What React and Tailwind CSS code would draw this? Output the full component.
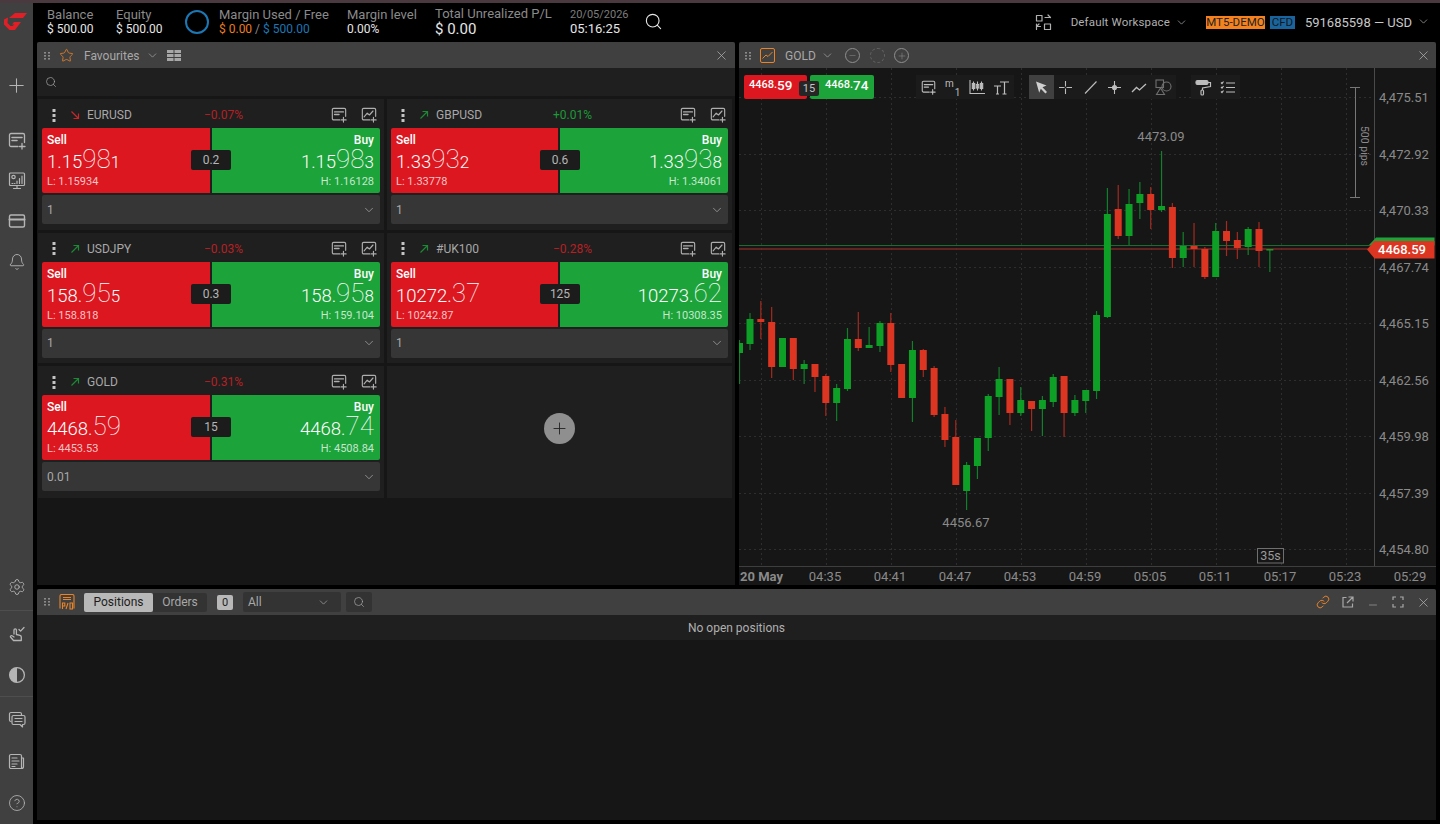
import React from "react";
import { ChevronDown, Search, X, Plus, Star, Settings, Bell, CircleHelp, Link as LinkIcon, Minus } from "lucide-react";

const S = ({ size = 20, children, className = "", vb = 24, sw = 1.5 }) => (
  <svg width={size} height={size} viewBox={`0 0 ${vb} ${vb}`} fill="none" stroke="currentColor" strokeWidth={sw} strokeLinecap="round" strokeLinejoin="round" className={className}>
    {children}
  </svg>
);

const Grip = () => (
  <svg width="6" height="8" viewBox="0 0 6 8" fill="#8a8a8a" className="shrink-0">
    {[0, 3, 6].map((y) => (
      <g key={y}>
        <rect x="0" y={y} width="2" height="1.6" />
        <rect x="4" y={y} width="2" height="1.6" />
      </g>
    ))}
  </svg>
);

const NewOrder = ({ size = 18 }) => (
  <S size={size} vb={18} sw={1.3}>
    <path d="M10 14.5H3a1.5 1.5 0 0 1-1.5-1.5V3A1.5 1.5 0 0 1 3 1.5h12A1.5 1.5 0 0 1 16.5 3v7.5" />
    <path d="M4 5.5h10M4 8.5h5" strokeWidth="1.6" />
    <path d="M14 11.5v5.5M11.5 14.5H17" />
  </S>
);
const NewChart = ({ size = 18 }) => (
  <S size={size} vb={18} sw={1.3}>
    <path d="M10 14.5H3a1.5 1.5 0 0 1-1.5-1.5V3A1.5 1.5 0 0 1 3 1.5h12A1.5 1.5 0 0 1 16.5 3v7.5" />
    <path d="M3.5 11l3.5-4 2.5 2 4-4.5" />
    <path d="M14 11.5v5.5M11.5 14.5H17" />
  </S>
);
const Dashboard = () => (
  <S size={18} vb={18} sw={1.2}>
    <rect x="1.5" y="1" width="15" height="12.5" rx="1" />
    <circle cx="5.5" cy="5" r="1.7" />
    <path d="M9 11.5V9M11.5 11.5V6.5M14 11.5V4M4 11.5h1M6.5 11.5h.5M9 15.5v-2M5.5 16.5h7" />
  </S>
);
const Card = () => (
  <S size={18} vb={18} sw={1.4}>
    <rect x="1.5" y="3" width="15" height="12" rx="1.5" />
    <path d="M1.5 7.5h15" strokeWidth="2" />
  </S>
);
const Hand = () => (
  <S size={18} vb={18} sw={1.3}>
    <path d="M6 9V5a1.2 1.2 0 0 1 2.4 0V9.5l3.6.9c.9.3 1.3.8 1.3 1.6v3.5H5.5L2.5 12c-.5-.7.6-1.9 1.6-1.2L6 12" />
    <path d="M11 4.5l1.6 1.6L16 2.5" />
  </S>
);
const Contrast = () => (
  <svg width="18" height="18" viewBox="0 0 18 18" fill="none">
    <circle cx="9" cy="9" r="7.4" stroke="#b5b5b5" strokeWidth="1.3" />
    <path d="M9 1.6a7.4 7.4 0 0 0 0 14.8z" fill="#b5b5b5" />
  </svg>
);
const Chat = () => (
  <S size={18} vb={18} sw={1.2}>
    <path d="M3 10.5a1.5 1.5 0 0 1-1.5-1.5V3A1.5 1.5 0 0 1 3 1.5h9A1.5 1.5 0 0 1 13.5 3v1" />
    <path d="M5.5 4.5h10A1.5 1.5 0 0 1 17 6v6a1.5 1.5 0 0 1-1.5 1.5h-1v2.5l-2.5-2.5H5.5A1.5 1.5 0 0 1 4 12V6a1.5 1.5 0 0 1 1.5-1.5z" />
    <path d="M7 7.5h7M7 10.5h7" />
  </S>
);
const News = () => (
  <S size={18} vb={18} sw={1.2}>
    <path d="M13.5 15.5H3A1.5 1.5 0 0 1 1.5 14V3A1.5 1.5 0 0 1 3 1.5h9A1.5 1.5 0 0 1 13.5 3v12.5a2 2 0 0 0 2-2V5h-2" />
    <path d="M4 5h5M4 8h7M4 11h5M4 13.5h3" />
  </S>
);
const Logo = () => (
  <svg width="24" height="18" viewBox="0 0 24 18" fill="#e01f26">
    <path d="M5 5L11 0H23L19 5z" />
    <path d="M0 6.5L4 4.5L3.5 10L6.5 13H8.5L10.5 11.5H8L10 9H17L11 17H5.5L0 11.5z" />
  </svg>
);
const Workspace = () => (
  <S size={17} vb={17} sw={1.2}>
    <rect x="1.5" y="1.5" width="5.5" height="5.5" />
    <rect x="9.5" y="10" width="6" height="5.5" />
    <path d="M1.5 10v5.5M10 3.5h5.5M13 1l2.5 2.5M5.5 12.5H1.5M4 10l-2.5 2.5" />
  </S>
);

const SideItem = ({ children, className = "" }) => (
  <div className={`h-[40px] w-full flex items-center justify-center text-[#b5b5b5] shrink-0 ${className}`}>{children}</div>
);

const Sidebar = () => (
  <aside className="w-[33px] shrink-0 bg-[#404040] flex flex-col">
    <div className="h-[38px] flex items-center justify-center shrink-0 pr-[1px]"><Logo /></div>
    <SideItem className="mt-[24px]"><Plus size={23} strokeWidth={1.1} /></SideItem>
    <SideItem className="mt-[16px]"><NewOrder /></SideItem>
    <SideItem><Dashboard /></SideItem>
    <SideItem><Card /></SideItem>
    <SideItem className="mt-[1px]"><Bell size={18} strokeWidth={1.2} /></SideItem>
    <div className="flex-1" />
    <SideItem><Settings size={18} strokeWidth={1.2} /></SideItem>
    <div className="h-px bg-[#4e4e4e] my-[3px] shrink-0" />
    <SideItem><Hand /></SideItem>
    <SideItem className="mt-[1px]"><Contrast /></SideItem>
    <div className="h-px bg-[#4e4e4e] my-[1px] shrink-0" />
    <SideItem className="mt-[2px]"><Chat /></SideItem>
    <SideItem className="mt-[2px]"><News /></SideItem>
    <SideItem className="mt-[1px] mb-[1px]"><CircleHelp size={18} strokeWidth={1.1} /></SideItem>
  </aside>
);

const Stat = ({ label, children, className = "" }) => (
  <div className={`flex flex-col leading-[14px] ${className}`}>
    <span className="text-[13px] text-[#8a8a8a]">{label}</span>
    {children}
  </div>
);

const TopBar = () => (
  <header className="h-[39px] shrink-0 bg-black flex items-center pl-[10px] pr-[6px] pb-[2px]">
    <Stat label="Balance" className="w-[69px]"><span className="text-[12px] text-[#e6e6e6]">$ 500.00</span></Stat>
    <Stat label="Equity" className="w-[69px]"><span className="text-[12px] text-[#e6e6e6]">$ 500.00</span></Stat>
    <div className="w-[24px] h-[24px] rounded-full border-2 border-[#1c77b5] shrink-0" />
    <Stat label="Margin Used / Free" className="w-[128px] ml-[10px]">
      <span className="text-[12px] text-[#8a8a8a]"><span className="text-[#e87d1e]">$ 0.00</span> / <span className="text-[#1c77b5]">$ 500.00</span></span>
    </Stat>
    <Stat label="Margin level" className="w-[88px]"><span className="text-[12px] text-[#e6e6e6]">0.00%</span></Stat>
    <Stat label="Total Unrealized P/L" className="w-[135px]"><span className="text-[15px] leading-[16px] text-[#e6e6e6]">$ 0.00</span></Stat>
    <div className="flex flex-col leading-[14px] w-[74px]">
      <span className="text-[11px] text-[#7d7d7d]">20/05/2026</span>
      <span className="text-[13px] text-[#e6e6e6]">05:16:25</span>
    </div>
    <Search size={19} strokeWidth={1.4} className="text-[#e6e6e6]" />
    <div className="flex-1" />
    <span className="text-[#b0b0b0] mr-[19px] mt-[2px]"><Workspace /></span>
    <span className="text-[11.5px] text-[#b0b0b0] tracking-[0.15px] mt-[2px]">Default Workspace</span>
    <ChevronDown size={13} strokeWidth={1.3} className="text-[#b0b0b0] ml-[5px] mr-[18px] mt-[2px]" />
    <span className="bg-[#f5821f] text-[#222] text-[11.5px] leading-[13px] h-[13px] w-[59px] text-center mt-[2px]">MT5-DEMO</span>
    <span className="bg-[#1a649e] text-[#101820] text-[11.5px] leading-[13px] h-[13px] w-[25px] text-center ml-[5px] mt-[2px]">CFD</span>
    <span className="text-[13px] text-[#c8c8c8] ml-[10px] mt-[3px]">591685598 — USD</span>
    <ChevronDown size={13} strokeWidth={1.3} className="text-[#b0b0b0] ml-[5px]" />
  </header>
);

const Price = ({ a, b, c }) => (
  <div className="flex items-baseline font-light text-white leading-[24px]">
    <span className="text-[18.5px]">{a}</span>
    <span className="text-[26px] font-thin">{b}</span>
    {c && <span className="text-[17px]">{c}</span>}
  </div>
);

const Arrow = ({ up }) =>
  up ? (
    <svg width="10" height="10" viewBox="0 0 10 10" fill="none" stroke="#1c8a34" strokeWidth="1.2"><path d="M1.5 8.5L8 2M3.5 1.5H8.5V6.5" /></svg>
  ) : (
    <svg width="10" height="10" viewBox="0 0 10 10" fill="none" stroke="#c9262c" strokeWidth="1.2"><path d="M1.5 1.5L8 8M8.5 3.5V8.5H3.5" /></svg>
  );

const quotes = [
  { name: "EURUSD", up: false, ch: "−0.07%", chc: "text-[#b71f24]", s: ["1.15", "98", "1"], b: ["1.15", "98", "3"], sp: "0.2", l: "1.15934", h: "1.16128", lot: "1" },
  { name: "GBPUSD", up: true, ch: "+0.01%", chc: "text-[#1c9a38]", s: ["1.33", "93", "2"], b: ["1.33", "93", "8"], sp: "0.6", l: "1.33778", h: "1.34061", lot: "1" },
  { name: "USDJPY", up: true, ch: "−0.03%", chc: "text-[#b71f24]", s: ["158.", "95", "5"], b: ["158.", "95", "8"], sp: "0.3", l: "158.818", h: "159.104", lot: "1" },
  { name: "#UK100", up: true, ch: "−0.28%", chc: "text-[#b71f24]", s: ["10272.", "37"], b: ["10273.", "62"], sp: "125", l: "10242.87", h: "10308.35", lot: "1" },
  { name: "GOLD", up: true, ch: "−0.31%", chc: "text-[#b71f24]", s: ["4468.", "59"], b: ["4468.", "74"], sp: "15", l: "4453.53", h: "4508.84", lot: "0.01" },
];

const QuoteCard = ({ q }) => (
  <div className="bg-[#1f1f1f] px-[4px] flex flex-col">
    <div className="h-[29px] shrink-0 flex items-center pt-[3px]">
      <svg width="4" height="13" viewBox="0 0 4 13" fill="#c4c4c4" className="ml-[10px]"><rect x="0.5" y="0" width="3" height="3" /><rect x="0.5" y="5" width="3" height="3" /><rect x="0.5" y="10" width="3" height="3" /></svg>
      <span className="ml-[14px] w-[17px]"><Arrow up={q.up} /></span>
      <span className="text-[12px] text-[#a8a8a8] w-[117px]">{q.name}</span>
      <span className={`text-[12px] w-[127px] ${q.chc}`}>{q.ch}</span>
      <span className="text-[#aeaeae] mr-[14px] h-[16px]"><NewOrder size={16} /></span>
      <span className="text-[#aeaeae] h-[16px]"><NewChart size={16} /></span>
    </div>
    <div className="relative h-[65px] shrink-0 flex gap-[2px]">
      <div className="flex-1 bg-[#dc1720] rounded-l-[2px] pl-[5px] pt-[6px] flex flex-col">
        <span className="text-[12px] font-medium text-white leading-[13px]">Sell</span>
        <Price a={q.s[0]} b={q.s[1]} c={q.s[2]} />
        <span className="text-[11px] text-white/75 leading-[13px] mt-[1px]">L: {q.l}</span>
      </div>
      <div className="flex-1 bg-[#1ca33a] rounded-r-[2px] pr-[6px] pt-[6px] flex flex-col items-end">
        <span className="text-[12px] font-medium text-white leading-[13px]">Buy</span>
        <Price a={q.b[0]} b={q.b[1]} c={q.b[2]} />
        <span className="text-[11px] text-white/75 leading-[13px] mt-[1px]">H: {q.h}</span>
      </div>
      <span className="absolute left-[149px] top-[22px] w-[40px] h-[20px] bg-[#1c1c1c] rounded-[2px] text-[12px] leading-[20px] text-center text-[#b5b5b5]">{q.sp}</span>
    </div>
    <div className="mt-[2px] h-[29px] shrink-0 bg-[#363636] rounded-[2px] flex items-center justify-between pl-[5px] pr-[4px]">
      <span className="text-[12px] text-[#a8a8a8]">{q.lot}</span>
      <ChevronDown size={14} strokeWidth={1.2} className="text-[#b0b0b0]" />
    </div>
  </div>
);

const Favourites = () => (
  <section className="w-[698px] shrink-0 bg-[#161616] rounded-t-[2px] flex flex-col overflow-hidden">
    <div className="h-[26px] shrink-0 bg-[#404040] flex items-center pl-[7px] pr-[6px] pt-[1px]">
      <Grip />
      <Star size={15} strokeWidth={1.3} className="text-[#e8832a] ml-[9px]" />
      <span className="text-[12px] text-[#a8a8a8] ml-[10px]">Favourites</span>
      <ChevronDown size={13} strokeWidth={1.3} className="text-[#a8a8a8] ml-[6px]" />
      <svg width="14" height="11" viewBox="0 0 14 11" fill="#a8a8a8" className="ml-[8px]">
        {[0, 4, 8].map((y) => (
          <g key={y}><rect x="0" y={y} width="6.5" height="3" /><rect x="7.5" y={y} width="6.5" height="3" /></g>
        ))}
      </svg>
      <div className="flex-1" />
      <X size={15} strokeWidth={1.2} className="text-[#b0b0b0]" />
    </div>
    <div className="h-[28px] shrink-0 bg-[#1f1f1f] flex items-center pl-[8px]">
      <Search size={12} strokeWidth={1.4} className="text-[#a8a8a8]" />
    </div>
    <div className="h-[3px] shrink-0" />
    <div className="grid grid-cols-[346px_345px] grid-rows-[130.5px_130.5px_132px] gap-x-[3px] gap-y-[3px] pl-[1px]">
      {quotes.map((q) => <QuoteCard key={q.name} q={q} />)}
      <div className="bg-[#1f1f1f] flex items-center justify-center pb-[8px]">
        <div className="w-[31px] h-[31px] rounded-full bg-[#8f8f8f] flex items-center justify-center">
          <Plus size={19} strokeWidth={1.1} className="text-[#1f1f1f]" />
        </div>
      </div>
    </div>
  </section>
);

/* [type, bodyTop, bodyBottom, wickTop, wickBottom] in page coordinates */
const candles = [
  ["g", 343, 353, 340, 384], ["g", 319, 344, 313, 350], ["r", 319, 322, 301, 339], ["r", 322, 367, 307, 378],
  ["g", 338, 367, 338, 367], ["r", 338, 369, 338, 380], ["g", 364, 369, 360, 384], ["r", 364, 377, 364, 392],
  ["r", 376, 403, 374, 416], ["g", 388, 403, 384, 421], ["g", 339, 389, 328, 391], ["r", 339, 348, 312, 351],
  ["g", 345, 348, 327, 348], ["g", 323, 346, 321, 352], ["r", 323, 365, 313, 372], ["r", 364, 398, 364, 398],
  ["g", 350, 398, 341, 422], ["r", 350, 370, 349, 377], ["r", 368, 415, 366, 417], ["r", 414, 440, 407, 447],
  ["r", 437, 485, 420, 485], ["g", 465, 491, 462, 510], ["g", 438, 466, 438, 479], ["g", 396, 438, 394, 451],
  ["g", 379, 397, 367, 415], ["r", 379, 413, 379, 425], ["g", 400, 413, 387, 416], ["r", 401, 409, 401, 431],
  ["g", 400, 409, 396, 436], ["g", 377, 402, 374, 407], ["r", 376, 413, 376, 437], ["g", 400, 413, 395, 416],
  ["g", 390, 401, 390, 413], ["g", 315, 391, 311, 399], ["g", 214, 317, 188, 318], ["r", 209, 236, 185, 239],
  ["g", 204, 236, 189, 245], ["g", 194, 203, 182, 219], ["r", 194, 210, 187, 229], ["g", 206, 210, 151, 212],
  ["r", 207, 258, 203, 268], ["g", 246, 258, 232, 267], ["r", 246, 249, 223, 267], ["r", 249, 277, 247, 279],
  ["g", 231, 277, 223, 277], ["r", 231, 241, 221, 256], ["r", 240, 248, 232, 259], ["g", 229, 247, 227, 255],
  ["r", 229, 251, 222, 267], ["g", 249, 250, 249, 272],
];
const vLines = [761, 826, 891, 956, 1021, 1086, 1151, 1216, 1281, 1346];
const hLines = [98, 155, 211, 268, 324, 381, 437, 494, 550];
const prices = ["4,475.51", "4,472.92", "4,470.33", "4,467.74", "4,465.15", "4,462.56", "4,459.98", "4,457.39", "4,454.80"];
const times = ["04:35", "04:41", "04:47", "04:53", "04:59", "05:05", "05:11", "05:17", "05:23", "05:29"];

const ChartSvg = () => (
  <svg width="697" height="517" viewBox="739 68 697 517" className="block" fontFamily="Roboto, sans-serif">
    {vLines.map((x) => <line key={x} x1={x + 0.5} x2={x + 0.5} y1="68" y2="566" stroke="#2e2e2e" strokeDasharray="2 3" />)}
    {hLines.map((y) => <line key={y} x1="739" x2="1374" y1={y - 0.5} y2={y - 0.5} stroke="#2e2e2e" strokeDasharray="2 3" />)}
    <line x1="739" x2="1372" y1="245.5" y2="245.5" stroke="#1f6a30" />
    <line x1="739" x2="1372" y1="249" y2="249" stroke="#7a2a24" strokeWidth="1.5" />
    {candles.map(([t, bt, bb, wt, wb], i) => {
      const cx = i === 0 ? 739.5 : 750 + (i - 1) * 10.83;
      const body = t === "g" ? "#0d9f26" : "#dc3522";
      const wick = t === "g" ? "#127f2a" : "#a32a20";
      return (
        <g key={i}>
          <rect x={cx - 0.6} y={wt} width="1.2" height={wb - wt} fill={wick} />
          <rect x={cx - 3.5} y={bt} width="7" height={Math.max(bb - bt, 1.5)} fill={body} />
        </g>
      );
    })}
    <line x1="1374.5" x2="1374.5" y1="68" y2="566" stroke="#4a4a4a" />
    <line x1="739" x2="1436" y1="566.5" y2="566.5" stroke="#3e3e3e" />
    <text x="1161" y="141" textAnchor="middle" fontSize="13" fill="#8a8a8a">4473.09</text>
    <text x="966" y="527" textAnchor="middle" fontSize="13" fill="#8a8a8a">4456.67</text>
    {prices.map((p, i) => <text key={p} x="1379" y={hLines[i] + 4} fontSize="13" fill="#8a8a8a">{p}</text>)}
    <text x="740" y="581" fontSize="13" fontWeight="700" fill="#8a8a8a">20 May</text>
    {times.map((t, i) => <text key={t} x={825 + 65 * i} y="581" textAnchor="middle" fontSize="13" fill="#8a8a8a">{t}</text>)}
    {/* 500 pips ruler */}
    <path d="M1350 87.5h10M1350 197.5h10M1355.5 87v111" stroke="#777" fill="none" />
    <text x="0" y="0" fontSize="10.5" fill="#8a8a8a" textAnchor="middle" transform="translate(1361 146) rotate(90)">500 pips</text>
    {/* bid and ask tags */}
    <path d="M1369 245l7-7.5h58.5v8z" fill="#1ca33a" />
    <path d="M1367 249.5l7.5-8.5h60v17.5h-60z" fill="#dc3522" />
    <text x="1378" y="254" fontSize="13" fontWeight="500" fill="#fff">4468.59</text>
    <rect x="1257.5" y="548.5" width="26" height="14.5" fill="#161616" stroke="#6f6f6f" />
    <text x="1270.5" y="560" textAnchor="middle" fontSize="12.5" fill="#9a9a9a">35s</text>
  </svg>
);

const Tool = ({ children, active }) => (
  <span className={`w-[24.5px] h-[24px] flex items-center justify-center text-[#bdbdbd] ${active ? "bg-[#404040]" : ""}`}>{children}</span>
);

const ChartOverlay = () => (
  <div className="absolute left-[5px] top-[7px] flex items-start">
    <div className="relative flex w-[130px] gap-[3px]">
      <span className="w-[63px] h-[24px] bg-[#dc1720] rounded-[2px] flex items-center pl-[5px] text-white font-medium text-[11px] pb-[3px]">4468.<span className="text-[13.5px]">59</span></span>
      <span className="w-[64px] h-[24px] bg-[#1ca33a] rounded-[2px] flex items-center pl-[15px] text-white font-medium text-[11px] pb-[3px]">4468.<span className="text-[13.5px]">74</span></span>
      <span className="absolute left-[55px] top-[6px] w-[20px] h-[15px] bg-[#262626] rounded-[2px] text-[11px] leading-[15px] text-center text-[#c4c4c4]">15</span>
    </div>
    <div className="ml-[42px] bg-[#1b1b1b] flex h-[24px]">
      <Tool><NewOrder size={15} /></Tool>
      <Tool><span className="text-[10px] leading-[10px] -mt-[5px]">m<sub className="text-[10px] ml-[1px] align-[-7px]">1</sub></span></Tool>
      <Tool>
        <svg width="17" height="17" viewBox="0 0 17 17" fill="none" stroke="currentColor" strokeWidth="1.1">
          <path d="M1 1v13.5h15" />
          <path d="M4.5 2.5v9M8.5 2.5v9M12.5 2.5v9" />
          <rect x="3.3" y="4.5" width="2.4" height="5" fill="currentColor" /><rect x="7.3" y="5.5" width="2.4" height="3.5" /><rect x="11.3" y="4.5" width="2.4" height="5" fill="currentColor" />
        </svg>
      </Tool>
      <Tool>
        <svg width="17" height="15" viewBox="0 0 17 15" fill="none" stroke="currentColor" strokeWidth="1.2"><path d="M7 2h9M11.5 2v12M9.5 14h4M1 6h7M4.5 6v8M3 14h3" /></svg>
      </Tool>
    </div>
    <div className="ml-[15px] bg-[#1b1b1b] flex h-[24px]">
      <Tool active>
        <svg width="15" height="15" viewBox="0 0 15 15" fill="#d0d0d0"><path d="M2 1.5l10.5 4-4 1.7 4.5 4.8-1.6 1.6-4.6-4.8-1.6 4z" /></svg>
      </Tool>
      <Tool><svg width="15" height="15" viewBox="0 0 15 15" stroke="currentColor" strokeWidth="1.1"><path d="M7.5 1v5.5M7.5 8.5V14M1 7.5h5.5M8.5 7.5H14" /></svg></Tool>
      <Tool><svg width="15" height="15" viewBox="0 0 15 15" stroke="currentColor" strokeWidth="1.1"><path d="M2 13.5L13.5 1.5" /></svg></Tool>
      <Tool><svg width="15" height="15" viewBox="0 0 15 15" fill="none" stroke="currentColor" strokeWidth="1.1"><path d="M7.5 1v13M1 7.5h13" /><circle cx="7.5" cy="7.5" r="2" fill="currentColor" /></svg></Tool>
      <Tool><svg width="16" height="15" viewBox="0 0 16 15" fill="none" stroke="currentColor" strokeWidth="1.3"><path d="M1 12l4.5-4.5 3 2.5L15 4" /></svg></Tool>
      <Tool>
        <svg width="17" height="17" viewBox="0 0 17 17" fill="none" stroke="#6f6f6f" strokeWidth="1.1"><rect x="1" y="1" width="7.5" height="7.5" /><circle cx="11.5" cy="7.5" r="4.5" /><path d="M5.5 9l4 6.5h-8z" /></svg>
      </Tool>
    </div>
    <div className="ml-[15px] bg-[#1b1b1b] flex h-[24px]">
      <Tool>
        <svg width="17" height="17" viewBox="0 0 17 17" fill="none" stroke="currentColor" strokeWidth="1.2"><rect x="1" y="1.5" width="12" height="4" rx="1.5" fill="currentColor" /><path d="M13 3.5h2.5v4l-8 1.5v2" /><rect x="6" y="11" width="2.5" height="5" rx="1" /></svg>
      </Tool>
      <Tool>
        <svg width="16" height="15" viewBox="0 0 16 15" fill="none" stroke="currentColor" strokeWidth="1.2"><path d="M6 3h9M6 7.5h9M6 12h9M1 2.5l1 1 1.5-2M1 7l1 1 1.5-2M1 11.5l1 1 1.5-2" /></svg>
      </Tool>
    </div>
  </div>
);

const ChartPanel = () => (
  <section className="w-[697px] shrink-0 bg-[#161616] rounded-t-[2px] flex flex-col overflow-hidden">
    <div className="h-[26px] shrink-0 bg-[#404040] flex items-center pl-[6px] pr-[5px] pt-[1px]">
      <Grip />
      <span className="ml-[9px] text-[#e8832a] border border-[#e8832a] rounded-[2px] w-[15px] h-[15px] flex items-center justify-center">
        <svg width="11" height="9" viewBox="0 0 11 9" fill="none" stroke="currentColor" strokeWidth="1"><path d="M.5 7.5L4 4l2 1.5L10.5 1" /></svg>
      </span>
      <span className="text-[12px] text-[#a8a8a8] ml-[10px] w-[30px]">GOLD</span>
      <ChevronDown size={13} strokeWidth={1.3} className="text-[#a8a8a8] ml-[6px]" />
      <span className="ml-[11px] w-[15px] h-[15px] rounded-full border border-[#8f8f8f] flex items-center justify-center text-[#8f8f8f]"><Minus size={9} strokeWidth={1.3} /></span>
      <span className="ml-[10px] w-[15px] h-[15px] rounded-full border border-dashed border-[#626262]" />
      <span className="ml-[9px] w-[15px] h-[15px] rounded-full border border-[#8f8f8f] flex items-center justify-center text-[#8f8f8f]"><Plus size={10} strokeWidth={1.3} /></span>
      <div className="flex-1" />
      <X size={15} strokeWidth={1.2} className="text-[#b0b0b0]" />
    </div>
    <div className="relative flex-1">
      <ChartSvg />
      <ChartOverlay />
    </div>
  </section>
);

const Bottom = () => (
  <section className="flex-1 bg-[#161616] rounded-t-[2px] flex flex-col overflow-hidden">
    <div className="h-[26px] shrink-0 bg-[#404040] flex items-center pl-[7px] pr-[5px]">
      <Grip />
      <span className="text-[#e8832a] ml-[9px]">
        <svg width="16" height="16" viewBox="0 0 16 16" fill="none" stroke="currentColor" strokeWidth="1.1">
          <path d="M1 14.5V2a1.5 1.5 0 0 1 1.5-1.5h11A1.5 1.5 0 0 1 15 2v12.5M4 3.5h8M4 5.5h8" />
          <path d="M3.5 15V9h2.3v3H3.5M7 15l2-6M11 9h2.5v6H11z" />
        </svg>
      </span>
      <div className="ml-[9px] flex h-[19px]">
        <span className="w-[69px] bg-[#b8b8b8] rounded-[2px] text-[#1c1c1c] text-[12px] leading-[19px] text-center">Positions</span>
        <span className="w-[54px] bg-[#333333] rounded-r-[2px] text-[#a8a8a8] text-[12px] leading-[19px] text-center">Orders</span>
      </div>
      <span className="ml-[10px] w-[16px] h-[15px] bg-[#b8b8b8] rounded-[2px] text-[#1c1c1c] text-[11px] leading-[15px] text-center">0</span>
      <div className="ml-[10px] w-[98px] h-[20px] bg-[#333333] rounded-[2px] flex items-center justify-between pl-[5px] pr-[11px]">
        <span className="text-[12px] text-[#a8a8a8]">All</span>
        <ChevronDown size={13} strokeWidth={1.3} className="text-[#a8a8a8]" />
      </div>
      <div className="ml-[5px] w-[26px] h-[20px] bg-[#333333] rounded-[2px] flex items-center justify-center">
        <Search size={12} strokeWidth={1.4} className="text-[#a8a8a8]" />
      </div>
      <div className="flex-1" />
      <LinkIcon size={14} strokeWidth={1.7} className="text-[#e8832a] mr-[12px]" />
      <svg width="12" height="12" viewBox="0 0 12 12" fill="none" stroke="#a8a8a8" strokeWidth="1.2" className="mr-[13px]"><path d="M10.5 7.5v3.5H1V1.5h3.5M5 7l5.5-5.5M6.5 1h4.5v4.5" /></svg>
      <Minus size={12} strokeWidth={1.3} className="text-[#a8a8a8] mr-[13px] mt-[6px]" />
      <svg width="12" height="12" viewBox="0 0 12 12" fill="none" stroke="#a8a8a8" strokeWidth="1.2" className="mr-[12px]"><path d="M1 4V1h3M8 1h3v3M11 8v3H8M4 11H1V8" /></svg>
      <X size={15} strokeWidth={1.2} className="text-[#b0b0b0]" />
    </div>
    <div className="h-[25px] shrink-0 bg-[#1f1f1f] flex items-center justify-center">
      <span className="text-[12px] text-[#b0b0b0]">No open positions</span>
    </div>
  </section>
);

export default function App() {
  return (
    <div className="w-[1440px] h-[824px] bg-black font-[Roboto,sans-serif] flex flex-col overflow-hidden">
      <div className="h-[3px] shrink-0 bg-[#4a3a40]" />
      <div className="flex-1 flex min-h-0">
        <Sidebar />
        <main className="flex-1 flex flex-col min-w-0 pl-[4px] pr-[4px] pb-[4px]">
          <TopBar />
          <div className="h-[543px] shrink-0 flex gap-[4px]">
            <Favourites />
            <ChartPanel />
          </div>
          <div className="h-[4px] shrink-0" />
          <Bottom />
        </main>
      </div>
    </div>
  );
}
